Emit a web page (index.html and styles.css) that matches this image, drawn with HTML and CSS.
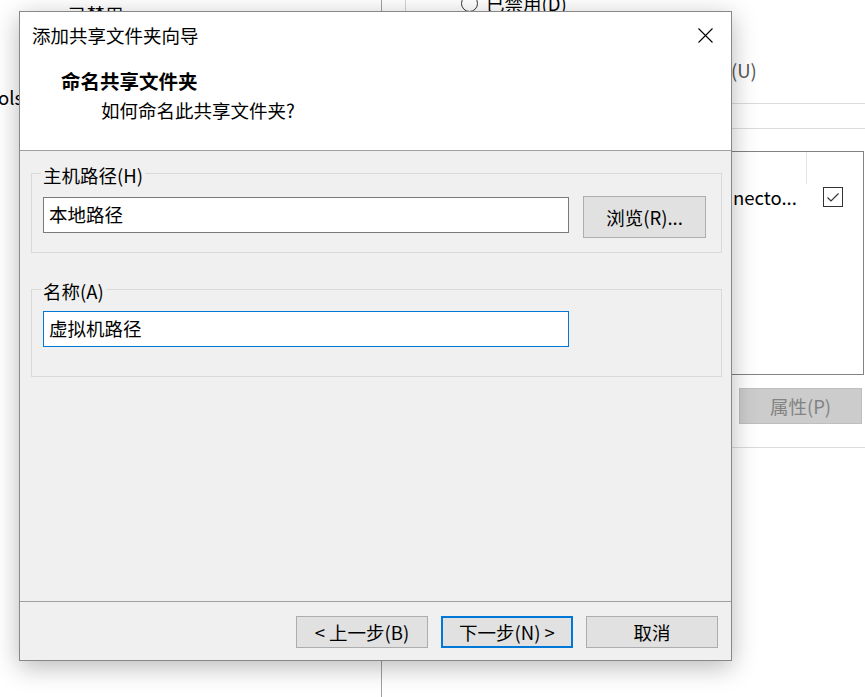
FILE: index.html
```html
<!DOCTYPE html>
<html lang="zh-CN">
<head>
<meta charset="utf-8">
<title>添加共享文件夹向导</title>
<link rel="stylesheet" href="styles.css">
</head>
<body>
<div class="desktop">
  <div class="bg-text bg-disabled-left">已禁用</div>
  <div class="bg-text bg-ols">ols</div>
  <div class="bg-vline vline-main"></div>
  <div class="bg-vline vline-short"></div>
  <div class="bg-radio"><span class="radio-circle"></span><span>已禁用(D)</span></div>
  <div class="bg-text bg-u">(U)</div>
  <div class="bg-hline hline-a"></div>
  <div class="bg-hline hline-b"></div>
  <div class="bg-list">
    <div class="list-head"><span class="col-divider"></span></div>
    <div class="list-row">
      <span class="list-name">necto...</span>
      <span class="list-check">
        <svg width="20" height="20" viewBox="0 0 20 20"><rect x="0.5" y="0.5" width="19" height="19" fill="#fff" stroke="#333"/><path d="M4.5 10.5 L8 14 L15.5 6.5" fill="none" stroke="#333" stroke-width="1.2"/></svg>
      </span>
    </div>
  </div>
  <div class="bg-button">属性(P)</div>
  <div class="bg-hline hline-c"></div>

  <div class="dialog">
    <div class="titlebar">
      <span class="title">添加共享文件夹向导</span>
      <span class="close">
        <svg width="15" height="15" viewBox="0 0 15 15"><path d="M0.5 0.5 L14.5 14.5 M14.5 0.5 L0.5 14.5" stroke="#000" stroke-width="1.1" fill="none"/></svg>
      </span>
    </div>
    <div class="header">
      <h1 class="heading">命名共享文件夹</h1>
      <p class="subheading">如何命名此共享文件夹?</p>
    </div>
    <div class="content">
      <fieldset class="group group-host">
        <legend class="group-label">主机路径(H)</legend>
        <div class="row">
          <div class="textbox">本地路径</div>
          <div class="btn btn-browse">浏览(R)...</div>
        </div>
      </fieldset>
      <fieldset class="group group-name">
        <legend class="group-label">名称(A)</legend>
        <div class="row">
          <div class="textbox focused">虚拟机路径</div>
        </div>
      </fieldset>
    </div>
    <div class="footer">
      <div class="btn btn-foot">&lt; 上一步(B)</div>
      <div class="btn btn-foot btn-default">下一步(N) &gt;</div>
      <div class="btn btn-foot">取消</div>
    </div>
  </div>
</div>
</body>
</html>
```
FILE: styles.css
```css
* { box-sizing: border-box; }
html, body { margin: 0; padding: 0; }
body {
  width: 865px;
  height: 697px;
  overflow: hidden;
  background: #fff;
  font-family: "Noto Sans CJK SC", "Noto Sans", sans-serif;
  font-size: 18.5px;
  color: #000;
}
.desktop { position: relative; width: 865px; height: 697px; overflow: hidden; }

/* background window pieces */
.bg-text { position: absolute; line-height: 24px; white-space: nowrap; }
.bg-disabled-left { left: 68px; top: 2px; }
.bg-ols { left: -2px; top: 85px; }
.bg-u { left: 731px; top: 58px; color: #555; }
.bg-radio {
  position: absolute; left: 461px; top: -9px;
  display: flex; align-items: center; gap: 8px; line-height: 24px; white-space: nowrap;
}
.radio-circle { width: 17px; height: 17px; border: 1px solid #333; border-radius: 50%; }
.bg-vline { position: absolute; top: 0; width: 1px; background: #a0a0a0; }
.vline-main { left: 381px; height: 697px; }
.vline-short { left: 405px; height: 20px; background: #d4d4d4; }
.bg-hline { position: absolute; left: 732px; right: 0; height: 1px; background: #dcdcdc; }
.hline-a { top: 103px; }
.hline-b { top: 128px; }
.hline-c { top: 447px; }
.bg-list {
  position: absolute; left: 690px; top: 151px; width: 174px; height: 224px;
  border: 1px solid #828282; background: #fff;
}
.list-head { position: relative; height: 32px; }
.col-divider { position: absolute; left: 115px; top: 0; width: 1px; height: 32px; background: #e5e5e5; }
.list-row { display: flex; align-items: center; height: 26px; }
.list-name { width: 115px; padding-left: 42px; white-space: nowrap; overflow: hidden; line-height: 24px; }
.list-check { display: flex; padding-left: 17px; }
.bg-button {
  position: absolute; left: 739px; top: 388px; width: 123px; height: 36px;
  background: #cccccc; border: 1px solid #bfbfbf; color: #838383;
  display: flex; align-items: center; justify-content: center; line-height: 24px;
}

/* dialog */
.dialog {
  position: absolute; left: 19px; top: 11px; width: 713px; height: 650px;
  border: 1px solid #888; background: #f0f0f0;
  box-shadow: 0 6px 24px rgba(0, 0, 0, 0.28);
  display: flex; flex-direction: column;
}
.titlebar {
  height: 46px; background: #fff;
  display: flex; align-items: center; justify-content: space-between;
  padding-left: 12px;
}
.title { line-height: 24px; }
.close { width: 52px; height: 46px; display: flex; align-items: center; justify-content: center; }
.header {
  height: 93px; background: #fff; border-bottom: 1px solid #a0a0a0;
  padding: 11px 0 0 41px;
}
.heading { margin: 0; font-size: 19.5px; font-weight: bold; line-height: 24px; }
.subheading { margin: 5px 0 0 40px; line-height: 24px; }
.content { flex: 1; padding: 8px 9px 0 11px; }
.group {
  margin: 0; min-width: 0;
  border: 1px solid #d9d9d9;
  padding: 9px 11px 14px;
}
.group-label { padding: 4px 2px 0; margin-left: -2px; line-height: 24px; }
.group-name { margin-top: 22px; padding-top: 8px; padding-bottom: 29px; }
.row { display: flex; align-items: flex-start; gap: 14px; }
.textbox {
  width: 526px; height: 36px; margin-top: 1px;
  border: 1px solid #7a7a7a; background: #fff;
  padding-left: 5px; line-height: 33px; white-space: nowrap;
}
.textbox.focused { border-color: #0078d7; margin-top: 0; }
.btn {
  background: #e1e1e1; border: 1px solid #adadad;
  display: flex; align-items: center; justify-content: center;
  line-height: 24px; white-space: nowrap;
}
.btn-browse { width: 123px; height: 42px; }
.footer {
  height: 59px; border-top: 1px solid #a0a0a0;
  display: flex; justify-content: flex-end; align-items: flex-start; gap: 13px;
  padding: 14px 13px 0 0;
}
.btn-foot { width: 132px; height: 32px; }
.btn-default { border: 2px solid #0078d7; }
```
